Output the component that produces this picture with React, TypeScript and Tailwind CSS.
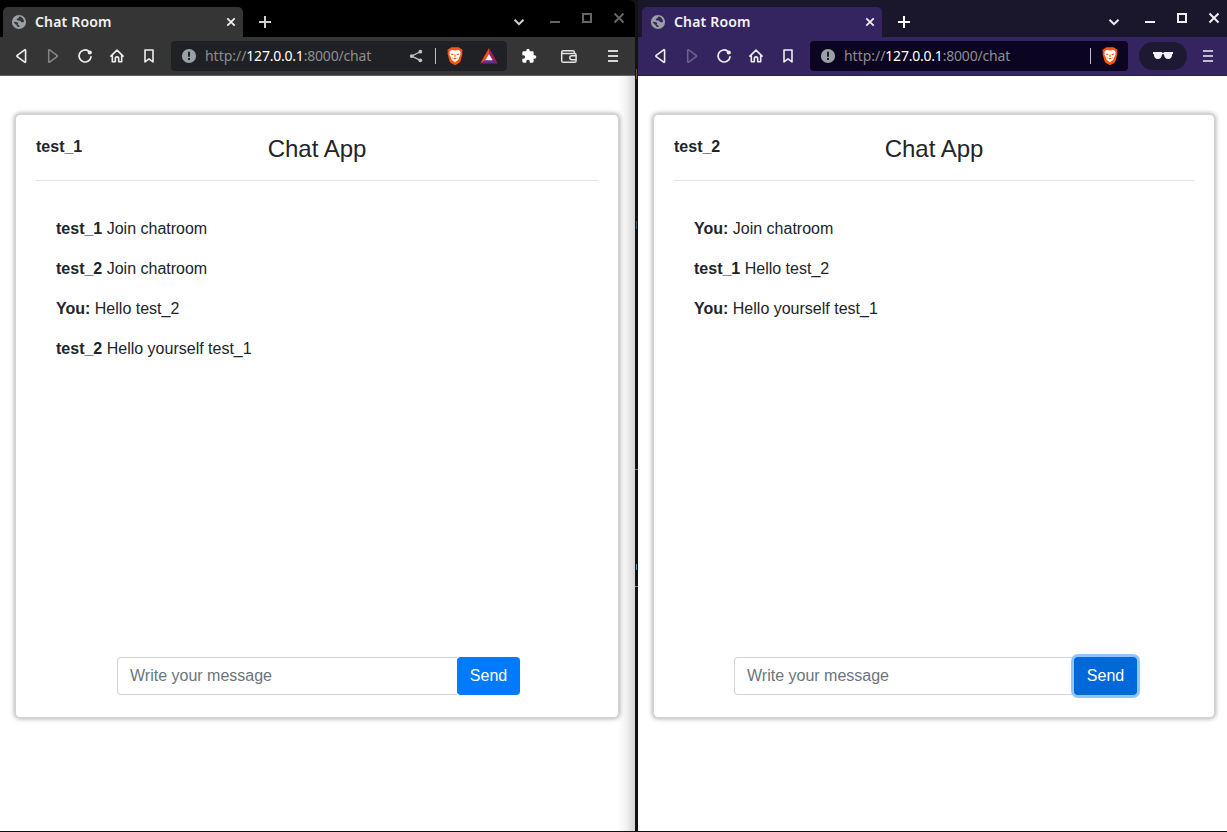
import type { ReactNode } from "react";
import clsx from "clsx";

type Message = { author: string; text: string };

function Glyph({ children, className }: { children: ReactNode; className?: string }) {
  return (
    <svg
      viewBox="0 0 20 20"
      className={clsx("h-5 w-5 shrink-0", className)}
      fill="none"
      stroke="currentColor"
      strokeWidth="1.7"
      strokeLinejoin="round"
      strokeLinecap="round"
    >
      {children}
    </svg>
  );
}

const Back = () => (
  <Glyph>
    <path d="M14.600 4.200v11.600c0 .5-.5.7-.9.4L6.200 10.700a.8.8 0 0 1 0-1.300l7.500-5.600c.4-.3.9-.1.9.4Z" strokeWidth="1.6" />
  </Glyph>
);
const Forward = ({ className }: { className: string }) => (
  <Glyph className={className}>
    <path d="M5.700 4.200v11.600c0 .5.500.7.900.4l7.500-5.500a.8.8 0 0 0 0-1.300L6.600 3.800c-.4-.3-.9-.1-.9.4Z" strokeWidth="1.5" />
  </Glyph>
);
const Reload = () => (
  <Glyph>
    <path d="M13.400 5A6 6 0 1 0 16 10.800" />
    <circle cx="14.800" cy="6.500" r="2.100" fill="currentColor" stroke="none" />
  </Glyph>
);
const Home = () => (
  <Glyph>
    <path d="M3.900 10.100 10 4.100l6.100 6M5.300 9v6.800h3v-3.200a1.700 1.700 0 0 1 3.400 0v3.200h3V9" strokeWidth="1.6" />
  </Glyph>
);
const Bookmark = () => (
  <Glyph>
    <path d="M6 4h8v12l-4-3.200L6 16Z" strokeWidth="1.6" />
  </Glyph>
);
const Info = () => (
  <Glyph className="text-[#9aa0a6]">
    <circle cx="10" cy="10" r="7.100" fill="currentColor" stroke="none" />
    <path d="M10 5.800v5" stroke="#202124" strokeWidth="2" strokeLinecap="butt" />
    <path d="M10 12v2" stroke="#202124" strokeWidth="2" strokeLinecap="butt" />
  </Glyph>
);
const Globe = ({ sea }: { sea: string }) => (
  <Glyph>
    <circle cx="10" cy="10" r="7.100" fill="#9aa0a6" stroke="none" />
    <path
      d="M11 4.500c-1.100.3-1.500 1-1.400 1.800l-1.700.5c-.4 1.100.1 1.600 1.100 1.800 1.400.2 2.400.1 2.700 1 .3.900 1.200.7 2 .6l1.300-.3c-.1-2.700-1.600-4.700-4-5.400Z"
      fill={sea}
      stroke="none"
    />
    <path
      d="M4.600 9.700c1.400-.1 2.800.100 3.900.7.800.4 1 .9.400 1.600-.4.500-.1 1 .500 1.100.7.100 1 .5 1.100 1l-.2.900C8.800 14.900 8 14.300 7.700 13.400 7.400 12.400 5.200 11.700 4.600 9.700Z"
      fill={sea}
      stroke="none"
    />
  </Glyph>
);
const Share = () => (
  <Glyph className="text-[#c2c3c4]">
    <path d="M14.400 5.800 5.600 10.100l8.800 4.300" strokeWidth="1.200" />
    <g fill="currentColor" stroke="none">
      <circle cx="14.300" cy="5.700" r="1.900" />
      <circle cx="5.700" cy="10.100" r="1.900" />
      <circle cx="14.300" cy="14.300" r="1.900" />
    </g>
  </Glyph>
);
const Lion = () => (
  <Glyph>
    <path
      d="m6.400 1.200-1.800 1.300L2.300 3.900l.6 2-.4 1.500 2 7.500c.3 1.200 1.500 2 2.800 2.800L10 19.300l2.700-1.600c1.300-.8 2.500-1.600 2.800-2.800l2-7.500-.4-1.500.6-2-2.300-1.400-1.800-1.300Z"
      fill="#fb5413"
      stroke="none"
    />
    <path
      d="m7 4.100-1.300.2-1.500 2.200.6 1-.4 1.200 1.800 3.200.4 1.800 3.400 2.600 3.400-2.600.4-1.800 1.800-3.200-.4-1.200.6-1-1.500-2.200-1.300-.2L10 4.600Z"
      fill="#fff"
      stroke="none"
    />
    <path
      d="m5.700 7.500 2.900.4-.6 1.300-1.900-.7Zm8.600 0-2.900.4.600 1.300 1.900-.7ZM8.100 12.400l1.900-.7 1.900.7-1.900 1.200ZM9.600 8.400h.8l.3 2.100-.7.400-.7-.4ZM7.100 11l.7 1-.4.900Zm5.800 0-.7 1 .4.900Z"
      fill="#fb5413"
      stroke="none"
    />
  </Glyph>
);
const Rewards = () => (
  <Glyph>
    <g stroke="none">
      <path d="M10 2 1.200 17.400 10 12.500Z" fill="#ff4724" />
      <path d="m10 2 8.800 15.400L10 12.500Z" fill="#9e1f63" />
      <path d="M1.200 17.400h17.600L10 12.300Z" fill="#662d91" />
      <path d="m10 8-3.700 6.300h7.400Z" fill="#fff" />
    </g>
  </Glyph>
);
const Puzzle = () => (
  <svg viewBox="0 0 24 24" className="h-4 w-4 shrink-0" fill="#fff">
    <path d="M20.500 11H19V7a2 2 0 0 0-2-2h-4V3.500a2.500 2.500 0 0 0-5 0V5H4c-1.100 0-2 .9-2 2v3.800h1.500a2.700 2.700 0 0 1 0 5.400H2V20c0 1.100.9 2 2 2h3.800v-1.500a2.700 2.700 0 0 1 5.400 0V22H17a2 2 0 0 0 2-2v-4h1.500a2.500 2.500 0 0 0 0-5Z" />
  </svg>
);
const Wallet = () => (
  <Glyph className="text-[#e4e4e4]">
    <path d="M15.400 7.200V6.300c0-1-.7-1.600-1.600-1.600H4.300c-.9 0-1.600.6-1.600 1.500M2.700 6.200c0 .7.600 1.200 1.500 1.200h11.300c.9 0 1.600.6 1.600 1.500v5.800c0 .9-.7 1.600-1.600 1.600H4.300c-.9 0-1.600-.7-1.600-1.600ZM17 9.800h-4.200a2 2 0 0 0 0 4H17" strokeWidth="1.500" />
  </Glyph>
);
const Menu = ({ className }: { className: string }) => (
  <Glyph className={className}>
    <path d="M5 5h10M5 10h10M5 15h10" strokeWidth="2" strokeLinecap="butt" />
  </Glyph>
);
const Shades = () => (
  <svg viewBox="0 0 20 10" className="h-2.5 w-5" fill="#f3f1f7">
    <path d="M0 1.100h8.600l.7.700h1.400l.7-.7H20V3h-.8c-.2 3.200-1.500 5-4 5-2.600 0-3.900-1.800-4.300-4.700H9.100C8.700 6.200 7.400 8 4.800 8 2.300 8 1 6.200.8 3H0Z" />
  </svg>
);

function WindowControls({ className }: { className: string }) {
  return (
    <svg viewBox="0 0 76 20" className={clsx("h-5 w-[76px] shrink-0", className)} fill="none" stroke="currentColor" strokeWidth="2">
      <path d="M1 14h10" />
      <path d="M34 6h8v8h-8Z" />
      <path d="m65.500 5.500 9 9m0-9-9 9" />
    </svg>
  );
}

type Theme = "normal" | "private";

function TabStrip({ theme }: { theme: Theme }) {
  const priv = theme === "private";
  return (
    <div className={clsx("flex h-[37px] shrink-0 pt-[7px]", priv ? "bg-[#1a172d] pl-1 pr-[7px]" : "rounded-tr-md bg-black pl-[3px] pr-2.5")}>
      <div className={clsx("flex h-[30px] w-60 shrink-0 items-center rounded-t-[5px] pl-1.5 pr-0.5 text-[#f2f2f2]", priv ? "bg-[#342561]" : "bg-[#353535]")}>
        <Globe sea={priv ? "#342561" : "#353535"} />
        <span className="ml-[6px] flex-1 font-['Noto_Sans',sans-serif] text-[14px] font-semibold leading-5 tracking-[0.18px] whitespace-nowrap">
          Chat Room
        </span>
        <Glyph>
          <path d="m6.300 6.300 7.400 7.400m0-7.400-7.400 7.400" strokeLinecap="butt" />
        </Glyph>
      </div>
      <Glyph className={clsx("ml-3 mt-[5px]", priv ? "text-white" : "text-[#d0d0d0]")}>
        <path d="M10 4v12M4 10h12" strokeWidth="2" strokeLinecap="butt" />
      </Glyph>
      <div className={clsx("ml-auto flex", priv ? "text-[#eeeef0]" : "text-[#d0d0d0]")}>
        <Glyph className="mt-[5px]">
          <path d="m5.500 7.700 4.500 4.500 4.500-4.500" strokeWidth="2" strokeLinecap="butt" strokeLinejoin="miter" />
        </Glyph>
        <WindowControls className={clsx("ml-5 mt-[1px]", !priv && "text-[#666]")} />
      </div>
    </div>
  );
}

function Toolbar({ theme }: { theme: Theme }) {
  const priv = theme === "private";
  return (
    <div
      className={clsx(
        "flex h-[39px] shrink-0 items-center border-b text-[#eeeeee]",
        priv ? "border-[#2c2051] bg-[#342561] pl-3 pr-[9px]" : "border-[#606060] bg-[#353535] pl-[11px] pr-3",
      )}
    >
      <div className="flex gap-3">
        <Back />
        <Forward className={priv ? "text-[#6d6290]" : "text-[#868686]"} />
        <Reload />
        <Home />
        <Bookmark />
      </div>
      <div className={clsx("ml-3 flex h-[30px] items-center rounded-[4px] pl-2 pr-2", priv ? "w-[318px] bg-[#0b0521]" : "w-[336px] bg-[#202124]")}>
        <Info />
        <span className="ml-1.5 flex-1 font-['Noto_Sans',sans-serif] text-[14px] leading-5 tracking-[-0.19px] whitespace-nowrap text-[#8c8d90]">
          <span className="tracking-[-0.03px]">http://</span>
          <span className="tracking-[-0.22px] text-white">127.0.0.1</span>:8000/chat
        </span>
        {!priv && <Share />}
        <span className={clsx("mr-[9px] h-4 w-px bg-[#bdc1c6]", !priv && "ml-[9px]")} />
        <Lion />
        {!priv && (
          <span className="ml-3.5 flex">
            <Rewards />
          </span>
        )}
      </div>
      {priv ? (
        <div className="ml-[11px] flex h-7 w-12 items-center justify-center rounded-full bg-[#1e1933]">
          <Shades />
        </div>
      ) : (
        <div className="ml-3.5 flex items-center gap-[22px]">
          <Puzzle />
          <Wallet />
        </div>
      )}
      <Menu className={clsx("ml-auto", priv ? "text-[#c0bbd0]" : "text-[#d6d6d6]")} />
    </div>
  );
}

function ChatCard({ user, messages, focused }: { user: string; messages: Message[]; focused?: boolean }) {
  return (
    <section className="flex h-[604px] flex-col rounded-[5px] border border-[#d2d2d2] bg-white p-5 font-['Liberation_Sans',Arial,sans-serif] text-base text-[#212529] shadow-[0_0_4px_1px_rgba(0,0,0,0.3)]">
      <header className="grid h-[46px] grid-cols-[1fr_auto_1fr] border-b border-[#e2e2e2]">
        <b className="leading-6">{user}</b>
        <h1 className="text-2xl leading-[27px]">Chat App</h1>
      </header>
      <div className="flex flex-1 flex-col gap-4 px-5 pt-9">
        {messages.map((m) => (
          <p key={m.author + m.text} className="leading-6">
            <b>{m.author}</b> {m.text}
          </p>
        ))}
      </div>
      <form className="mb-0.5 ml-[3px] flex h-[38px] w-[403px] self-center" onSubmit={(e) => e.preventDefault()}>
        <input
          className="min-w-0 flex-1 rounded-l-[4px] border border-r-0 border-[#ced4da] px-3 outline-none placeholder:text-[#6c757d]"
          placeholder="Write your message"
        />
        <button
          className={clsx(
            "w-[63px] rounded-[4px] text-white",
            focused ? "bg-[#0069d9] shadow-[0_0_0_3px_#8fc5ff]" : "bg-[#007bff]",
          )}
        >
          Send
        </button>
      </form>
    </section>
  );
}

export default function App() {
  return (
    <div className="flex h-[832px] w-[1227px] overflow-hidden border-b border-[#111] bg-[#131313]">
      <div className="flex w-[635px] shrink-0 flex-col">
        <TabStrip theme="normal" />
        <Toolbar theme="normal" />
        <main className="flex-1 bg-[linear-gradient(to_right,#fff_617px,#f3f3f3_626px,#d5d5d5_635px)] pl-[15px] pr-4 pt-[38px]">
          <ChatCard
            user="test_1"
            messages={[
              { author: "test_1", text: "Join chatroom" },
              { author: "test_2", text: "Join chatroom" },
              { author: "You:", text: "Hello test_2" },
              { author: "test_2", text: "Hello yourself test_1" },
            ]}
          />
        </main>
      </div>
      <div className="flex w-[3px] shrink-0 flex-col">
        <span className="mt-[69px] h-[10px] w-px self-center bg-[#7e4a34]" />
        <span className="mt-[142px] h-2 w-px self-center bg-[#31547b]" />
        <span className="mt-[240px] h-px bg-[#827062]" />
        <span className="mt-[94px] h-[6px] w-px self-center bg-[#4f91b2]" />
        <span className="mt-[16px] h-px bg-[#8a8179]" />
      </div>
      <div className="flex w-[589px] shrink-0 flex-col">
        <TabStrip theme="private" />
        <Toolbar theme="private" />
        <main className="flex-1 bg-white pl-[15px] pr-3 pt-[38px]">
          <ChatCard
            user="test_2"
            focused
            messages={[
              { author: "You:", text: "Join chatroom" },
              { author: "test_1", text: "Hello test_2" },
              { author: "You:", text: "Hello yourself test_1" },
            ]}
          />
        </main>
      </div>
    </div>
  );
}
